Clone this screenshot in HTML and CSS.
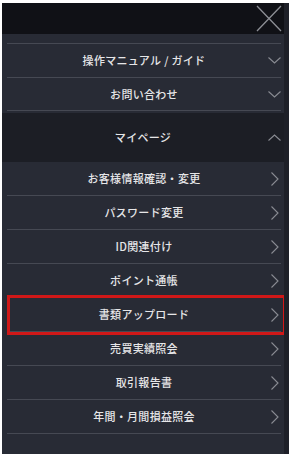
FILE: index.html
```html
<!DOCTYPE html>
<html lang="ja">
<head>
<meta charset="utf-8">
<link rel="stylesheet" href="styles.css">
</head>
<body>
<div class="panel">
  <div class="header">
    <button class="close" aria-label="閉じる">
      <svg width="26" height="27" viewBox="0 0 26 27"><path d="M1 1 L25 26 M25 1 L1 26" stroke="#8d8f95" stroke-width="1.3" fill="none"/></svg>
    </button>
  </div>
  <ul class="list top">
    <li class="row r1"><span class="label">操作マニュアル / ガイド</span><svg class="chev" width="13" height="7" viewBox="0 0 13 7"><path d="M0.5 0.5 L6.5 6 L12.5 0.5" stroke="#8a8c93" stroke-width="1.1" fill="none"/></svg></li>
    <li class="row r2"><span class="label">お問い合わせ</span><svg class="chev" width="13" height="7" viewBox="0 0 13 7"><path d="M0.5 0.5 L6.5 6 L12.5 0.5" stroke="#8a8c93" stroke-width="1.1" fill="none"/></svg></li>
  </ul>
  <div class="section">
    <span class="label">マイページ</span><svg class="chev" width="13" height="7" viewBox="0 0 13 7"><path d="M0.5 6.5 L6.5 1 L12.5 6.5" stroke="#8a8c93" stroke-width="1.1" fill="none"/></svg>
  </div>
  <ul class="list sub">
    <li class="row"><span class="label">お客様情報確認・変更</span><svg class="chev r" width="8" height="14" viewBox="0 0 8 14"><path d="M0.5 0.5 L7 7 L0.5 13.5" stroke="#8a8c93" stroke-width="1.1" fill="none"/></svg></li>
    <li class="row"><span class="label">パスワード変更</span><svg class="chev r" width="8" height="14" viewBox="0 0 8 14"><path d="M0.5 0.5 L7 7 L0.5 13.5" stroke="#8a8c93" stroke-width="1.1" fill="none"/></svg></li>
    <li class="row"><span class="label">ID関連付け</span><svg class="chev r" width="8" height="14" viewBox="0 0 8 14"><path d="M0.5 0.5 L7 7 L0.5 13.5" stroke="#8a8c93" stroke-width="1.1" fill="none"/></svg></li>
    <li class="row"><span class="label">ポイント通帳</span><svg class="chev r" width="8" height="14" viewBox="0 0 8 14"><path d="M0.5 0.5 L7 7 L0.5 13.5" stroke="#8a8c93" stroke-width="1.1" fill="none"/></svg></li>
    <li class="row marked"><span class="label">書類アップロード</span><svg class="chev r" width="8" height="14" viewBox="0 0 8 14"><path d="M0.5 0.5 L7 7 L0.5 13.5" stroke="#8a8c93" stroke-width="1.1" fill="none"/></svg><span class="highlight"></span></li>
    <li class="row"><span class="label">売買実績照会</span><svg class="chev r" width="8" height="14" viewBox="0 0 8 14"><path d="M0.5 0.5 L7 7 L0.5 13.5" stroke="#8a8c93" stroke-width="1.1" fill="none"/></svg></li>
    <li class="row"><span class="label">取引報告書</span><svg class="chev r" width="8" height="14" viewBox="0 0 8 14"><path d="M0.5 0.5 L7 7 L0.5 13.5" stroke="#8a8c93" stroke-width="1.1" fill="none"/></svg></li>
    <li class="row"><span class="label">年間・月間損益照会</span><svg class="chev r" width="8" height="14" viewBox="0 0 8 14"><path d="M0.5 0.5 L7 7 L0.5 13.5" stroke="#8a8c93" stroke-width="1.1" fill="none"/></svg></li>
  </ul>
</div>
</body>
</html>
```

FILE: styles.css
```css
* { box-sizing: border-box; }
html, body { background: #ffffff; }
body {
  margin: 3px 2px 4px 2px;
  font-family: "Noto Sans CJK JP", "Noto Sans", sans-serif;
}
.panel {
  width: 287px;
  height: 451px;
  background: #282b35;
  border-right: 5px solid #1e2028;
  display: flex;
  flex-direction: column;
  overflow: hidden;
}
.header {
  height: 31px;
  flex: none;
  background: #101116;
  display: flex;
  justify-content: flex-end;
  align-items: flex-start;
  padding: 2px 2px 0 0;
}
.close {
  background: none;
  border: 0;
  padding: 0;
  width: 26px;
  height: 27px;
  display: block;
}
.close svg { display: block; }
.list {
  list-style: none;
  margin: 0 3px 0 5px;
  padding: 0;
}
.list.top {
  margin-top: 9px;
  border-top: 1px solid #464953;
}
.row {
  position: relative;
  height: 34px;
  border-bottom: 1px solid #464953;
  display: grid;
  grid-template-columns: 24px 1fr 24px;
  align-items: center;
}
.row.r1 { height: 34px; }
.row.r2 { height: 33px; }
.label {
  grid-column: 2;
  text-align: center;
  color: #e6e6e8;
  font-size: 11px;
  font-weight: 500;
  letter-spacing: 0.3px;
  line-height: 1;
}
.chev {
  grid-column: 3;
  justify-self: end;
  display: block;
}
.chev.r { margin-right: 2px; }
.section {
  margin-top: 2px;
  height: 49px;
  flex: none;
  background: #1c1e25;
  display: grid;
  grid-template-columns: 29px 1fr 29px;
  align-items: center;
}
.section .label { grid-column: 2; }
.section .chev { grid-column: 3; justify-self: end; margin-right: 3px; }
.highlight {
  position: absolute;
  top: -3px;
  bottom: -4px;
  left: 0;
  right: -5px;
  border: 3px solid #d01818;
  pointer-events: none;
}
```
